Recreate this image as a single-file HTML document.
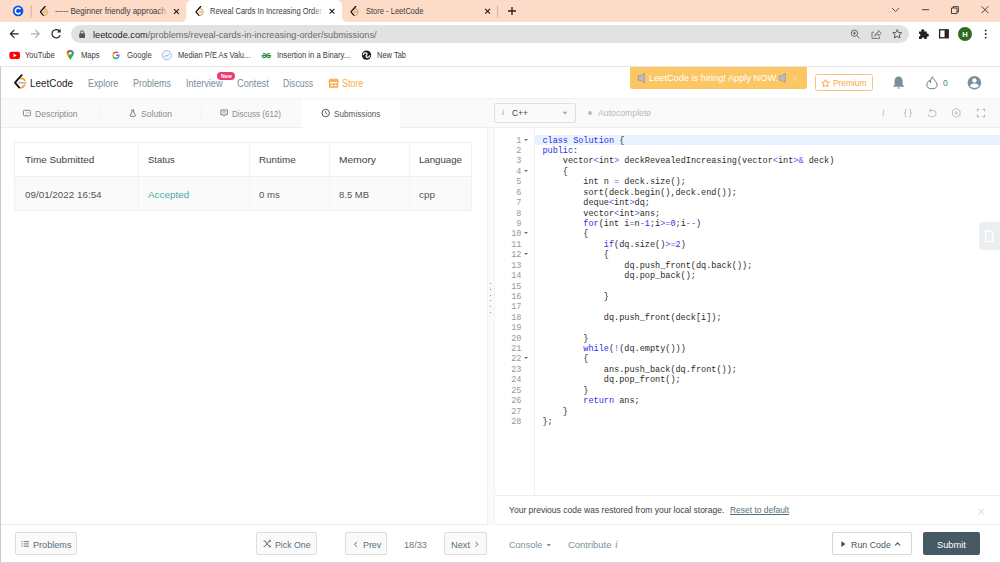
<!DOCTYPE html>
<html lang="en">
<head>
<meta charset="utf-8">
<title>Reveal Cards In Increasing Order - LeetCode</title>
<style>
*{box-sizing:border-box;margin:0;padding:0}
html,body{width:1000px;height:563px;overflow:hidden;background:#fff}
body{font-family:"Liberation Sans",sans-serif;color:#333;position:relative;font-size:9px}
.abs{position:absolute;white-space:nowrap}
.t{line-height:1;transform-origin:0 0;z-index:3}
/* ---------- browser chrome ---------- */
#tabstrip{left:0;top:0;width:1000px;height:22px;background:#fcdbc8}
#toolbar{left:0;top:22px;width:1000px;height:23px;background:#fff}
#urlbar{left:70.5px;top:24.8px;width:838.5px;height:18.2px;border-radius:9.1px;background:#e2e2e2}
#bookmarks{left:0;top:45px;width:1000px;height:22px;background:#fff;border-bottom:1px solid #e6e6e6}
.fade{top:4px;width:12px;height:14px;z-index:4}
/* ---------- leetcode nav ---------- */
#nav{left:0;top:67px;width:1000px;height:31px;background:#fff;box-shadow:0 1px 1.5px rgba(0,0,0,.045);z-index:1}
#subnav{left:0;top:98px;width:1000px;height:30px;background:#fafafa;border-bottom:1px solid #eeeeee}
#acttab2{left:302px;top:98px;width:98.4px;height:31px;background:#fff}
.sep{top:107px;width:1px;height:12px;background:#f0f0f0}
#newb{left:217px;top:71.7px;width:18px;height:8.6px;border-radius:4.3px;background:#ec3d72;z-index:2}
#winL{left:0;top:67px;width:1px;height:496px;background:#c9c9c9;z-index:5}
#winB{left:0;top:561.6px;width:1000px;height:1.4px;background:#d9d9d9;z-index:5}
/* ---------- left panel ---------- */
#tbl{left:14px;top:142px;width:458px;height:69px;border:1px solid #f0f0f0;background:#fff}
#tblrow{left:15px;top:176px;width:456px;height:34px;background:#fafafa;border-top:1px solid #f0f0f0}
.vd{top:143px;width:1px;height:67px;background:#f2f2f2}
#divider{left:486.5px;top:128px;width:8.3px;height:396.5px;background:#fafafa;border-left:1px solid #f0f0f0;border-right:1px solid #f2f2f2}
.dot{left:490.2px;width:1px;height:1px;background:#8f8f8f}
#botL{left:1px;top:524px;width:486px;height:1px;background:#ececec}
.btn{top:532.4px;height:22.2px;border:1px solid #dddddd;border-radius:2px;background:#fafafa}
/* ---------- right panel ---------- */
#lang{left:494.4px;top:103.4px;width:82px;height:19.2px;border:1px solid #e0e0e0;border-radius:2px;background:#fafafa}
#gutline{left:534px;top:128px;width:1px;height:368px;background:#f0f0f0}
#actline{left:535px;top:134.6px;width:465px;height:10.3px;background:#e8f2fe}
pre.abs{white-space:pre}
pre{font-family:"Liberation Mono",monospace;font-size:8.54px;line-height:10.42px;color:#2a2a2a}
#code{left:542.4px;top:135.6px}
#lnum{left:495px;top:135.6px;width:26.4px;text-align:right;color:#999}
.k{color:#2f2fe6}.o{color:#4a5cf0}
.fold{left:524.3px;width:0;height:0;border-left:2.1px solid transparent;border-right:2.1px solid transparent;border-top:2.8px solid #6f6f6f}
#msg{left:495px;top:495px;width:505px;height:30px;background:#fff;border-top:1px solid #eeeeee;border-bottom:1px solid #eeeeee}
#float{left:979px;top:222px;width:21px;height:28px;background:#eceff1;border-radius:3px 0 0 3px}
#run{left:831.8px;top:532.4px;width:80px;height:22.3px;border:1px solid #d6d6d6;border-radius:2px;background:#fff}
#submit{left:923.3px;top:532.4px;width:56.4px;height:22.3px;border-radius:2px;background:#455a64}
#banner{left:630px;top:67px;width:177px;height:21.7px;background:#fdc665;border-radius:0 0 2.5px 2.5px;z-index:2}
#prem{left:815.3px;top:74px;width:57.4px;height:17px;border:1px solid #f9c27c;border-radius:2.5px;background:#fff;z-index:2}
.serif-i{font-family:"Liberation Serif",serif;font-style:italic;line-height:1}
</style>
</head>
<body>
<!-- browser chrome -->
<div id="tabstrip" class="abs"></div>
<div id="toolbar" class="abs"></div>
<div id="urlbar" class="abs"></div>
<div id="bookmarks" class="abs"></div>
<svg class="abs" style="left:0;top:0" width="1000" height="67" viewBox="0 0 1000 67">
<defs>
<symbol id="lc" viewBox="0 0 13 15">
<path d="M6.8,4.5 Q9.2,3.4 10.9,6.2" fill="none" stroke="#f7a11b" stroke-width="1.7" stroke-linecap="round"/>
<path d="M5.2,13.4 Q8.2,15 10.9,11" fill="none" stroke="#f7a11b" stroke-width="1.7" stroke-linecap="round"/>
<path d="M7.9,0.8 L1,8.6 L5.2,13.3" fill="none" stroke="#111" stroke-width="1.9" stroke-linecap="round" stroke-linejoin="round"/>
<path d="M5,8.6 L12.2,8.6" fill="none" stroke="#b0b0b0" stroke-width="1.6" stroke-linecap="round"/>
</symbol>
<symbol id="x" viewBox="0 0 10 10"><path d="M2,2 L8,8 M8,2 L2,8" stroke="#222" stroke-width="1.5" fill="none"/></symbol>
</defs>
<!-- active tab -->
<path d="M180,22 Q186.4,22 186.4,16 L186.4,6 Q186.4,0 192.4,0 L336,0 Q342,0 342,6 L342,16 Q342,22 348,22 Z" fill="#fff"/>
<!-- first icon: blue C -->
<circle cx="18.1" cy="10.9" r="5.3" fill="#0b53e6"/>
<path d="M20.4,9.3 A2.8,2.8 0 1 0 20.4,12.5" fill="none" stroke="#fff" stroke-width="1.5"/>
<path d="M31.2,5 L31.2,17.5" stroke="#c8a591" stroke-width="0.8"/>
<use href="#lc" x="39.6" y="5.8" width="9" height="10.6"/>
<use href="#lc" x="195.2" y="5.8" width="9" height="10.6"/>
<use href="#lc" x="350.2" y="5.8" width="9" height="10.6"/>
<use href="#x" x="172.4" y="7.5" width="8" height="8"/>
<use href="#x" x="328" y="7.3" width="8" height="8"/>
<use href="#x" x="483.6" y="7.3" width="8" height="8"/>
<path d="M497.6,5.6 L497.6,17.6" stroke="#c8a591" stroke-width="0.8"/>
<path d="M508,11 L516,11 M512,7 L512,15" stroke="#222" stroke-width="1.3"/>
<!-- window controls -->
<path d="M892,8 L895.6,11.5 L899.2,8" fill="none" stroke="#444" stroke-width="0.9"/>
<path d="M922,9.7 L929,9.7" stroke="#333" stroke-width="0.9"/>
<path d="M951.5,8 L957,8 L957,13.5 L951.5,13.5 Z M953,8 L953,6.6 L958.4,6.6 L958.4,12 L957,12" fill="none" stroke="#333" stroke-width="0.9"/>
<path d="M981.6,6.3 L988.4,13.1 M988.4,6.3 L981.6,13.1" stroke="#333" stroke-width="0.9"/>
<!-- nav arrows -->
<path d="M18.6,33.8 L10.6,33.8 M14.4,29.8 L10.4,33.8 L14.4,37.8" fill="none" stroke="#222" stroke-width="1.2"/>
<path d="M31,33.8 L39,33.8 M35.2,29.8 L39.2,33.8 L35.2,37.8" fill="none" stroke="#b0b0b0" stroke-width="1.2"/>
<path d="M59.6,31.2 A4.2,4.2 0 1 0 60.2,35.2" fill="none" stroke="#222" stroke-width="1.2"/>
<path d="M60.6,28.8 L60.6,32.4 L57,32.4 Z" fill="#222"/>
<!-- lock -->
<rect x="79.2" y="33.2" width="5.8" height="4.8" rx="0.7" fill="#555"/>
<path d="M80.5,33.4 L80.5,32.4 A1.6,1.6 0 0 1 83.7,32.4 L83.7,33.4" fill="none" stroke="#555" stroke-width="1"/>
<!-- zoom -->
<circle cx="854.4" cy="33.2" r="3.2" fill="none" stroke="#666" stroke-width="1"/>
<path d="M856.8,35.6 L859.6,38.4 M852.8,33.2 L856,33.2 M854.4,31.6 L854.4,34.8" stroke="#666" stroke-width="1" fill="none"/>
<!-- share -->
<path d="M874,32.2 L872,32.2 L872,38.4 L879.6,38.4 L879.6,36.6" fill="none" stroke="#777" stroke-width="1"/>
<path d="M874.6,36.4 Q875,32.6 878.4,32.4 L878.4,30.4 L881.4,33.2 L878.4,36 L878.4,34.2 Q876,34.2 874.6,36.4 Z" fill="none" stroke="#777" stroke-width="0.9" stroke-linejoin="round"/>
<!-- star -->
<path d="M897.2,29.6 L898.5,32.5 L901.6,32.8 L899.3,34.9 L900,38 L897.2,36.4 L894.4,38 L895.1,34.9 L892.8,32.8 L895.9,32.5 Z" fill="none" stroke="#555" stroke-width="1" stroke-linejoin="round"/>
<!-- puzzle -->
<path d="M919,31.4 L921.4,31.4 A1.5,1.5 0 1 1 924.2,31.4 L926.8,31.4 L926.8,33.8 A1.5,1.5 0 1 1 926.8,36.6 L926.8,39 L924.4,39 A1.4,1.4 0 1 0 921.6,39 L919,39 L919,36.6 A1.4,1.4 0 1 0 919,33.8 Z" fill="#222"/>
<!-- side panel -->
<rect x="939.6" y="29.8" width="8.6" height="8" fill="none" stroke="#222" stroke-width="1.3"/>
<rect x="944.6" y="29.8" width="3.6" height="8" fill="#222"/>
<!-- avatar -->
<circle cx="965" cy="34" r="7" fill="#2f6b1e"/>
<text x="965" y="36.8" font-family="Liberation Sans, sans-serif" font-size="7.6" font-weight="bold" fill="#fff" text-anchor="middle">H</text>
<circle cx="985.7" cy="30.4" r="0.9" fill="#222"/><circle cx="985.7" cy="34" r="0.9" fill="#222"/><circle cx="985.7" cy="37.6" r="0.9" fill="#222"/>
<!-- bookmarks icons -->
<rect x="9.4" y="51.8" width="10.6" height="7.2" rx="2" fill="#f00"/>
<path d="M13.5,53.6 L13.5,57.2 L16.6,55.4 Z" fill="#fff"/>
<path d="M70.3,49.9 C72.6,49.9 73.9,51.6 73.9,53.3 C73.9,55.6 71.4,57.4 70.3,60 C69.2,57.4 66.7,55.6 66.7,53.3 C66.7,51.6 68,49.9 70.3,49.9 Z" fill="#34a853"/>
<path d="M70.3,49.9 C72.6,49.9 73.9,51.6 73.9,53.3 L70.3,53.3 Z" fill="#4285f4"/>
<path d="M66.7,53.3 C66.7,51.6 68,49.9 70.3,49.9 L70.3,53.3 Z" fill="#ea4335"/>
<path d="M66.7,53.3 L70.3,53.3 L68,56.6 C67.2,55.6 66.7,54.5 66.7,53.3 Z" fill="#fbbc04"/>
<circle cx="70.3" cy="53.3" r="1.3" fill="#fff"/>
<!-- google G -->
<path d="M119.6,54.6 L116,54.6 L116,56 L118.2,56 A2.6,2.6 0 0 1 116,57.8 L116,59.2 A3.9,3.9 0 0 0 119.6,54.6 Z" fill="#4285f4"/>
<path d="M116,51.4 A3.9,3.9 0 0 0 112.6,53.4 L113.9,54.3 A2.5,2.5 0 0 1 117.7,53.4 L118.8,52.4 A3.9,3.9 0 0 0 116,51.4 Z" fill="#ea4335"/>
<path d="M112.6,53.4 A3.9,3.9 0 0 0 112.6,57.2 L113.9,56.3 A2.5,2.5 0 0 1 113.9,54.3 Z" fill="#fbbc05"/>
<path d="M112.6,57.2 A3.9,3.9 0 0 0 116,59.2 L116,57.8 A2.5,2.5 0 0 1 113.9,56.3 Z" fill="#34a853"/>
<!-- median icon -->
<circle cx="166.8" cy="55.2" r="4.6" fill="#f3f7fd" stroke="#8fb0e6" stroke-width="0.8"/>
<path d="M164.4,57 L166,55.4 L167.2,56.2 L169.4,53.6" fill="none" stroke="#7e9fd6" stroke-width="0.8"/>
<!-- gfg icon -->
<path d="M265.8,55.6 L262.2,55.6 A2,2 0 1 0 262.8,54.2" fill="none" stroke="#2f8d46" stroke-width="1.1"/>
<path d="M266.8,55.6 L270.6,55.6 A2,2 0 1 1 270,54.2" fill="none" stroke="#2f8d46" stroke-width="1.1"/>
<!-- globe -->
<circle cx="366.5" cy="55.1" r="4.7" fill="#1f1f1f"/>
<path d="M363.3,54.6 Q363.8,52.4 365.8,52.9 Q367.8,53.6 366.6,55 Q365.4,56.2 366.8,57.2 Q368.6,58 369.7,55.8" fill="none" stroke="#fff" stroke-width="1.25" stroke-linecap="round"/>
</svg>
<div class="abs fade" style="left:158px;background:linear-gradient(90deg,rgba(252,219,200,0),rgba(252,219,200,1) 90%)"></div>
<div class="abs fade" style="left:313px;background:linear-gradient(90deg,rgba(255,255,255,0),rgba(255,255,255,1) 90%)"></div>
<!-- leetcode nav -->
<div id="nav" class="abs"></div>
<div id="subnav" class="abs"></div>
<div id="acttab2" class="abs"></div>
<div class="abs sep" style="left:100px"></div>
<div class="abs sep" style="left:201px"></div>
<div id="newb" class="abs"></div>
<div id="banner" class="abs"></div>
<div id="prem" class="abs"></div>
<!-- submissions table -->
<div id="tbl" class="abs"></div>
<div id="tblrow" class="abs"></div>
<div class="abs vd" style="left:138px"></div>
<div class="abs vd" style="left:249px"></div>
<div class="abs vd" style="left:329px"></div>
<div class="abs vd" style="left:409px"></div>
<div id="divider" class="abs"></div>
<div class="abs dot" style="top:283px"></div>
<div class="abs dot" style="top:289px"></div>
<div class="abs dot" style="top:295px"></div>
<div class="abs dot" style="top:300px"></div>
<div class="abs dot" style="top:306px"></div>
<div class="abs dot" style="top:312px"></div>
<div id="botL" class="abs"></div>
<div class="abs btn" style="left:14.6px;width:62px"></div>
<div class="abs btn" style="left:256.1px;width:60.6px"></div>
<div class="abs btn" style="left:345.3px;width:41.6px"></div>
<div class="abs btn" style="left:444.3px;width:42.3px"></div>
<!-- editor -->
<div id="lang" class="abs"></div>
<div class="abs serif-i" style="left:502px;top:108.4px;font-size:8.6px;color:#9e9e9e">i</div>
<div class="abs serif-i" style="left:881.8px;top:107.6px;font-size:10.4px;color:#b0bec5">i</div>
<div class="abs serif-i" style="left:615px;top:539.6px;font-size:9.6px;color:#78909c">i</div>
<div id="gutline" class="abs"></div>
<div id="actline" class="abs"></div>
<pre id="lnum" class="abs">1
2
3
4
5
6
7
8
9
10
11
12
13
14
15
16
17
18
19
20
21
22
23
24
25
26
27
28</pre>
<div class="abs fold" style="top:138.60px"></div>
<div class="abs fold" style="top:169.86px"></div>
<div class="abs fold" style="top:232.38px"></div>
<div class="abs fold" style="top:253.22px"></div>
<div class="abs fold" style="top:357.42px"></div>
<pre id="code" class="abs"><span class="k">class</span> <span class="k">Solution</span> {
<span class="k">public</span>:
    vector<span class="o">&lt;</span>int<span class="o">&gt;</span> deckRevealedIncreasing(vector<span class="o">&lt;</span>int<span class="o">&gt;&amp;</span> deck)
    {
        int n <span class="o">=</span> deck.size();
        sort(deck.begin(),deck.end());
        deque<span class="o">&lt;</span>int<span class="o">&gt;</span>dq;
        vector<span class="o">&lt;</span>int<span class="o">&gt;</span>ans;
        <span class="k">for</span>(int i<span class="o">=</span>n<span class="o">-</span><span class="k">1</span>;i<span class="o">&gt;=</span><span class="k">0</span>;i<span class="o">--</span>)
        {
            <span class="k">if</span>(dq.size()<span class="o">&gt;=</span><span class="k">2</span>)
            {
                dq.push_front(dq.back());
                dq.pop_back();

            }

            dq.push_front(deck[i]);

        }
        <span class="k">while</span>(<span class="o">!</span>(dq.empty()))
        {
            ans.push_back(dq.front());
            dq.pop_front();
        }
        <span class="k">return</span> ans;
    }
};</pre>

<div id="float" class="abs"></div>
<div id="msg" class="abs"></div>
<div id="run" class="abs"></div>
<div id="submit" class="abs"></div>
<div id="winL" class="abs"></div>
<div id="winB" class="abs"></div>
<svg class="abs" style="left:0;top:67px;z-index:4" width="1000" height="496" viewBox="0 67 1000 496">
<!-- leetcode logo -->
<use href="#lc" x="14" y="74.2" width="12.8" height="14.8"/>
<!-- store icon -->
<rect x="329" y="78.7" width="9.2" height="9" rx="0.7" fill="#f7ab40"/>
<path d="M328.4,81.9 L328.9,80 L338.3,80 L338.8,81.9 Z" fill="#f7ab40"/>
<rect x="329" y="79.75" width="9.2" height="0.35" fill="#fff" opacity="0.6"/>
<rect x="330.1" y="81.9" width="7" height="1.5" fill="#fff"/>
<rect x="330.6" y="84.7" width="2.4" height="1.5" fill="#fff"/>
<rect x="334.2" y="84.7" width="2.4" height="1.5" fill="#fff"/>
<!-- tab icons -->
<rect x="23.4" y="110.3" width="7" height="5.5" rx="1" fill="none" stroke="#828282" stroke-width="1"/>
<path d="M25.4,113.8 L27,113.8 M27.2,112.6 L28.8,112.6" stroke="#a8a8a8" stroke-width="0.8"/>
<path d="M131.6,109.9 L134,109.9 M132,110 L132,112 L130.1,115.4 Q129.9,116.3 130.9,116.3 L134.7,116.3 Q135.7,116.3 135.5,115.4 L133.6,112 L133.6,110" fill="none" stroke="#808080" stroke-width="1" stroke-linejoin="round"/>
<path d="M220.8,109.9 L227.4,109.9 L227.4,114.6 L225.2,114.6 L224.1,116.2 L223,114.6 L220.8,114.6 Z" fill="none" stroke="#828282" stroke-width="1" stroke-linejoin="round"/>
<path d="M222.4,111.6 L225.8,111.6 M222.4,113 L225.8,113" stroke="#9a9a9a" stroke-width="0.8"/>
<circle cx="325.7" cy="113" r="3.7" fill="none" stroke="#505a62" stroke-width="1"/>
<path d="M325.7,110.8 L325.7,113.2 L327.3,114.2" fill="none" stroke="#505a62" stroke-width="0.9"/>
<!-- banner icons -->
<g fill="#b9bdc2" stroke="#858a91" stroke-width="0.6" stroke-linejoin="round">
<path d="M638.3,75.9 L640.4,75.9 L644.3,73.3 L644.3,82.6 L640.4,80.3 L638.3,80.3 Z"/>
<path d="M779.3,75.9 L781.4,75.9 L785.3,73.3 L785.3,82.6 L781.4,80.3 L779.3,80.3 Z"/>
</g>
<path d="M792.2,76.2 L796.8,80.8 M796.8,76.2 L792.2,80.8" stroke="#fee3b0" stroke-width="0.9"/>
<!-- premium star -->
<path d="M825.6,79.6 L826.7,82 L829.3,82.3 L827.4,84.1 L827.9,86.7 L825.6,85.4 L823.3,86.7 L823.8,84.1 L821.9,82.3 L824.5,82 Z" fill="none" stroke="#f7a93b" stroke-width="1" stroke-linejoin="round"/>
<!-- bell -->
<path d="M898.6,76.6 C901.6,76.6 902.6,79 902.6,81.6 L902.6,84.4 L904,86.2 L904,86.8 L893.2,86.8 L893.2,86.2 L894.6,84.4 L894.6,81.6 C894.6,79 895.6,76.6 898.6,76.6 Z" fill="#78909c"/>
<path d="M897.4,87.6 L899.8,87.6 A1.2,1.2 0 0 1 897.4,87.6 Z" fill="#78909c"/>
<!-- flame -->
<path d="M932.4,76.8 C932.8,79.6 937.2,81.4 937.2,85 C937.2,87.4 935.2,88.8 932,88.8 C928.8,88.8 926.8,87.4 926.8,85 C926.8,83 928.2,81.6 929.2,80.4 C929.4,81.6 929.8,82.2 930.6,82.6 C930.4,80.4 931,78.2 932.4,76.8 Z" fill="none" stroke="#607d8b" stroke-width="1" stroke-linejoin="round"/>
<!-- avatar -->
<circle cx="974.4" cy="82.7" r="6.8" fill="#78909c"/>
<circle cx="974.4" cy="80.4" r="2.2" fill="#fff"/>
<path d="M970,86.6 Q970,83.6 974.4,83.6 Q978.8,83.6 978.8,86.6 Q976.8,87.9 974.4,87.9 Q972,87.9 970,86.6 Z" fill="#fff"/>
<!-- lang caret, autocomplete dot -->
<path d="M562.6,111.8 L567.4,111.8 L565,114.4 Z" fill="#a5a5a5"/>
<circle cx="590" cy="113" r="1.9" fill="#b5b5b5"/>
<!-- editor toolbar icons -->
<g fill="none" stroke="#b0bec5" stroke-width="0.95">
<path d="M906.6,109 Q905.4,109 905.4,110.2 L905.4,112 Q905.4,113.1 904.2,113.1 Q905.4,113.1 905.4,114.2 L905.4,116 Q905.4,117.2 906.6,117.2"/>
<path d="M909.2,109 Q910.4,109 910.4,110.2 L910.4,112 Q910.4,113.1 911.6,113.1 Q910.4,113.1 910.4,114.2 L910.4,116 Q910.4,117.2 909.2,117.2"/>
<path d="M929.6,110.4 L933,110.4 A3,3 0 0 1 933,116.6 L930.6,116.6 A3,3 0 0 1 928,113.6"/>
<path d="M931.2,108.6 L929.2,110.4 L931.2,112.2"/>
<path d="M956.2,108.4 L960,110.6 L960,115.2 L956.2,117.4 L952.4,115.2 L952.4,110.6 Z" stroke-linejoin="round"/>
<circle cx="956.2" cy="112.9" r="1.2"/>
<path d="M977.4,111.4 L977.4,109.4 L979.4,109.4 M982.6,109.4 L984.6,109.4 L984.6,111.4 M984.6,114.6 L984.6,116.6 L982.6,116.6 M979.4,116.6 L977.4,116.6 L977.4,114.6" stroke-width="1.1"/>
</g>
<!-- floating doc icon -->
<path d="M985.6,230.8 L990.2,230.8 L993,233.6 L993,241.4 L985.6,241.4 Z" fill="none" stroke="#fff" stroke-width="1.4" stroke-linejoin="round"/>
<!-- msg close -->
<path d="M978.4,508.8 L984,514.4 M984,508.8 L978.4,514.4" stroke="#c4c4c4" stroke-width="0.8"/>
<!-- bottom bar icons -->
<g stroke="#546e7a" stroke-width="0.9" fill="none">
<path d="M21.4,541.6 L22.4,541.6 M23.6,541.6 L29,541.6 M21.4,543.9 L22.4,543.9 M23.6,543.9 L29,543.9 M21.4,546.2 L22.4,546.2 M23.6,546.2 L29,546.2"/>
<path d="M263.6,541 L265,541 L269,546.4 L270.6,546.4 M263.6,546.4 L265,546.4 L269,541 L270.6,541" stroke-width="1"/>
<path d="M269.4,539.8 L270.8,541 L269.4,542.2 M269.4,545.2 L270.8,546.4 L269.4,547.6" stroke-width="0.8"/>
<path d="M356.8,541.9 L354.6,544.3 L356.8,546.7" stroke-width="1"/>
<path d="M475.6,541.9 L477.8,544.3 L475.6,546.7" stroke-width="1"/>
<path d="M895.2,545.4 L897.6,542.8 L900,545.4" stroke="#455a64" stroke-width="1.1"/>
</g>
<path d="M546.6,544 L551,544 L548.8,546.4 Z" fill="#78909c"/>
<path d="M841.4,541.2 L845.4,544.1 L841.4,547 Z" fill="#37474f"/>
</svg>

<div class="abs t" style="left:54.6px;top:7px;font-size:8.3px;color:#3b3b3b;transform:scaleX(0.9627);z-index:2">----- Beginner friendly approach</div>
<div class="abs t" style="left:209.7px;top:7px;font-size:8.3px;color:#3b3b3b;transform:scaleX(0.9054);z-index:2">Reveal Cards In Increasing Order</div>
<div class="abs t" style="left:365.6px;top:7px;font-size:8.3px;color:#3b3b3b;transform:scaleX(0.9084);z-index:2">Store - LeetCode</div>
<div class="abs t" style="left:92.8px;top:30px;font-size:9.4px;color:#6a6a6a;transform:scaleX(0.9807);z-index:2"><span style="color:#222">leetcode.com</span>/problems/reveal-cards-in-increasing-order/submissions/</div>
<div class="abs t" style="left:24.8px;top:51px;font-size:8.5px;color:#3a3a3a;transform:scaleX(0.8920);">YouTube</div>
<div class="abs t" style="left:80.9px;top:51px;font-size:8.5px;color:#3a3a3a;transform:scaleX(0.8992);">Maps</div>
<div class="abs t" style="left:126.6px;top:51px;font-size:8.5px;color:#3a3a3a;transform:scaleX(0.9007);">Google</div>
<div class="abs t" style="left:177.9px;top:51px;font-size:8.5px;color:#3a3a3a;transform:scaleX(0.8861);">Median P/E As Valu...</div>
<div class="abs t" style="left:276.8px;top:51px;font-size:8.5px;color:#3a3a3a;transform:scaleX(0.8973);">Insertion in a Binary...</div>
<div class="abs t" style="left:377px;top:51px;font-size:8.5px;color:#3a3a3a;transform:scaleX(0.8809);">New Tab</div>
<div class="abs t" style="left:30.2px;top:79px;font-size:10.2px;color:#222;transform:scaleX(0.9731);">LeetCode</div>
<div class="abs t" style="left:88px;top:79px;font-size:10px;color:#7d8b97;transform:scaleX(0.8877);">Explore</div>
<div class="abs t" style="left:132.8px;top:79px;font-size:10px;color:#7d8b97;transform:scaleX(0.9018);">Problems</div>
<div class="abs t" style="left:185.6px;top:79px;font-size:10px;color:#7d8b97;transform:scaleX(0.9121);">Interview</div>
<div class="abs t" style="left:236.5px;top:79px;font-size:10px;color:#7d8b97;transform:scaleX(0.9197);">Contest</div>
<div class="abs t" style="left:282.9px;top:79px;font-size:10px;color:#7d8b97;transform:scaleX(0.8596);">Discuss</div>
<div class="abs t" style="left:342.3px;top:79px;font-size:10px;color:#f6ad45;transform:scaleX(0.8826);">Store</div>
<div class="abs t" style="left:220.7px;top:74px;font-size:5.3px;color:#fff;transform:scaleX(0.9811);font-weight:bold;z-index:3">New</div>
<div class="abs t" style="left:648.8px;top:73px;font-size:9.7px;color:#fff;transform:scaleX(0.9521);z-index:3">LeetCode is hiring! Apply NOW.</div>
<div class="abs t" style="left:833.2px;top:79px;font-size:9.2px;color:#f7a93b;transform:scaleX(0.9085);">Premium</div>
<div class="abs t" style="left:943px;top:79px;font-size:9px;color:#607d8b;transform:scaleX(0.9570);">0</div>
<div class="abs t" style="left:35px;top:109px;font-size:9.5px;color:#8a8a8a;transform:scaleX(0.8963);">Description</div>
<div class="abs t" style="left:141px;top:109px;font-size:9.5px;color:#8a8a8a;transform:scaleX(0.9026);">Solution</div>
<div class="abs t" style="left:232.4px;top:109px;font-size:9.5px;color:#8a8a8a;transform:scaleX(0.8437);">Discuss (612)</div>
<div class="abs t" style="left:334px;top:109px;font-size:9.5px;color:#555;transform:scaleX(0.8615);">Submissions</div>
<div class="abs t" style="left:24.9px;top:155px;font-size:9.8px;color:#424242;transform:scaleX(1.0139);">Time Submitted</div>
<div class="abs t" style="left:147.5px;top:155px;font-size:9.8px;color:#424242;transform:scaleX(0.9647);">Status</div>
<div class="abs t" style="left:259.2px;top:155px;font-size:9.8px;color:#424242;transform:scaleX(1.0059);">Runtime</div>
<div class="abs t" style="left:339px;top:155px;font-size:9.8px;color:#424242;transform:scaleX(1.0455);">Memory</div>
<div class="abs t" style="left:418.5px;top:155px;font-size:9.8px;color:#424242;transform:scaleX(0.9864);">Language</div>
<div class="abs t" style="left:24.7px;top:190px;font-size:9.8px;color:#555;transform:scaleX(1.0042);">09/01/2022 16:54</div>
<div class="abs t" style="left:147.5px;top:190px;font-size:9.8px;color:#4caaa0;transform:scaleX(1.0108);">Accepted</div>
<div class="abs t" style="left:259.2px;top:190px;font-size:9.8px;color:#555;transform:scaleX(0.9795);">0 ms</div>
<div class="abs t" style="left:339px;top:190px;font-size:9.8px;color:#555;transform:scaleX(0.9663);">8.5 MB</div>
<div class="abs t" style="left:418.5px;top:190px;font-size:9.8px;color:#555;transform:scaleX(1.0129);">cpp</div>
<div class="abs t" style="left:32.5px;top:540px;font-size:9.8px;color:#546e7a;transform:scaleX(0.9302);">Problems</div>
<div class="abs t" style="left:274.6px;top:540px;font-size:9.8px;color:#546e7a;transform:scaleX(0.8956);">Pick One</div>
<div class="abs t" style="left:362.7px;top:540px;font-size:9.8px;color:#546e7a;transform:scaleX(0.9029);">Prev</div>
<div class="abs t" style="left:404.3px;top:540px;font-size:9.8px;color:#757575;transform:scaleX(0.9335);">18/33</div>
<div class="abs t" style="left:450.6px;top:540px;font-size:9.8px;color:#546e7a;transform:scaleX(0.9426);">Next</div>
<div class="abs t" style="left:512px;top:109px;font-size:8.8px;color:#444;transform:scaleX(0.9615);">C++</div>
<div class="abs t" style="left:598.4px;top:109px;font-size:9.2px;color:#b8b8b8;transform:scaleX(0.9468);">Autocomplete</div>
<div class="abs t" style="left:509.3px;top:505px;font-size:9.4px;color:#424242;transform:scaleX(0.9094);">Your previous code was restored from your local storage.</div>
<div class="abs t" style="left:729.5px;top:505px;font-size:9.4px;color:#546e7a;transform:scaleX(0.8999);"><span style="text-decoration:underline">Reset to default</span></div>
<div class="abs t" style="left:508.5px;top:540px;font-size:9.8px;color:#78909c;transform:scaleX(0.9262);">Console</div>
<div class="abs t" style="left:567.8px;top:540px;font-size:9.8px;color:#78909c;transform:scaleX(0.9601);">Contribute</div>
<div class="abs t" style="left:850.5px;top:540px;font-size:9.8px;color:#455a64;transform:scaleX(0.9020);">Run Code</div>
<div class="abs t" style="left:936.8px;top:540px;font-size:9.8px;color:#fff;transform:scaleX(0.9475);">Submit</div>

</body>
</html>
